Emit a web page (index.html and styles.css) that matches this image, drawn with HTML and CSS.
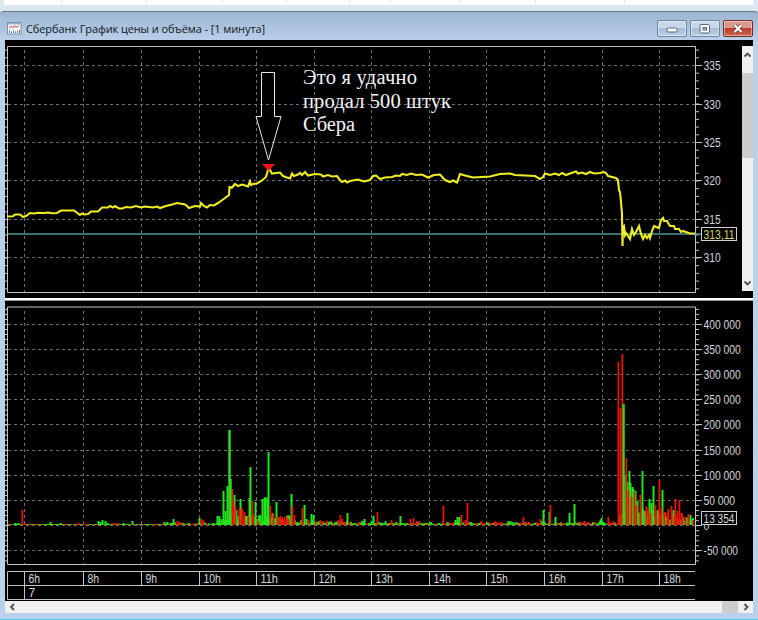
FILE: index.html
```html
<!DOCTYPE html>
<html lang="ru">
<head>
    <meta charset="UTF-8">
    <meta name="viewport" content="width=device-width, initial-scale=1.0">
    <title>Сбербанк График цены и объёма</title>
    <link rel="stylesheet" href="styles.css">
</head>
<body>
    <div class="top-strip">
        <span></span><span></span><span></span><span></span><span></span><span></span><span></span><span></span><span></span><span></span>
    </div>

    <div class="window">
        <div class="title-bar">
            <svg class="title-icon" width="15" height="13" viewBox="0 0 15 13">
                <rect x="0.5" y="0.5" width="13.5" height="11.5" fill="#f4f8fb" stroke="#7d93a5"/>
                <rect x="1" y="1" width="12.5" height="1.5" fill="#8fb4cc"/>
                <path d="M2 5.5l2-1 2 1 2-1.5 2 1 2-1" fill="none" stroke="#d2443c"/>
                <path d="M2.5 11V8.5M4.5 11V9.5M6.5 11V8.5M8.5 11V9.5M10.5 11V8.5M12.5 11V8" stroke="#5b7d96"/>
            </svg>
            <h1 class="title">Сбербанк График цены и объёма - [1 минута]</h1>
            <div class="buttons">
                <button class="btn">
                    <svg width="12" height="8" viewBox="0 0 12 8"><rect x="1" y="3" width="10" height="4" rx="1" fill="#fff" stroke="#5c6b7c"/></svg>
                </button>
                <button class="btn">
                    <svg width="12" height="10" viewBox="0 0 12 10"><rect x="1" y="0.5" width="9.5" height="8.5" rx="1" fill="#fff" stroke="#5c6b7c"/><rect x="4" y="3.5" width="3.5" height="2.5" fill="#9db8d6" stroke="#5c6b7c"/></svg>
                </button>
                <button class="btn btn-close">
                    <svg width="12" height="9" viewBox="0 0 12 9"><path d="M2.5 1l7 7M9.5 1l-7 7" stroke="#6d3a3a" stroke-width="3.6"/><path d="M2.5 1l7 7M9.5 1l-7 7" stroke="#fff" stroke-width="2.2"/></svg>
                </button>
            </div>
        </div>

        <div class="content">
            <div class="panel">
                <svg class="price-chart" width="737" height="258" viewBox="5 40 737 258">
                    <g id="price-grid"></g>
                    <path class="frame" d="M7.5 46.5H695.5V292.5H7.5Z"/>
                    <path class="last-price" d="M8 234H701"/>
                    <polyline id="price-line" class="price-line"/>
                    <path class="arrow" d="M261.5 72.5H274.5V116.5H281L268.5 160L256 116.5H261.5Z"/>
                    <path d="M262 164H275L268.5 171Z" fill="#f01414"/>
                    <g class="note">
                        <text x="303" y="84" textLength="114">Это я удачно</text>
                        <text x="303" y="108" textLength="148">продал 500 штук</text>
                        <text x="303" y="131" textLength="52">Сбера</text>
                    </g>
                    <rect class="tag" x="701.5" y="227.5" width="35" height="13"/>
                    <text class="label last" x="703.5" y="238.5" textLength="31" lengthAdjust="spacingAndGlyphs">313,11</text>
                </svg>
                <div class="scroll-v">
                    <svg width="11" height="27" viewBox="0 0 11 27"><path d="M2.5 10.5L5.5 7.5L8.5 10.5" class="chevron"/></svg>
                    <div class="thumb-v"></div>
                    <svg class="down" width="11" height="15" viewBox="0 0 11 15"><path d="M2.5 5.5L5.5 8.5L8.5 5.5" class="chevron"/></svg>
                </div>
            </div>

            <div class="splitter"></div>

            <svg class="volume-chart" width="748" height="300" viewBox="5 301 748 300">
                <g id="volume-grid"></g>
                <path class="frame" d="M7.5 307H695.5V564.5H7.5Z"/>
                <g id="bars"></g>
                <rect class="tag" x="701.5" y="511.5" width="35" height="13"/>
                <text class="label" x="703.5" y="522.5" textLength="31" lengthAdjust="spacingAndGlyphs">13 354</text>
                <path class="frame" d="M695 571.5H7.5V599.5H695M7.5 585.5H695M24.5 571V599"/>
                <g id="hours"></g>
                <text class="label" x="28.5" y="596.5">7</text>
            </svg>
        </div>

        <div class="scroll-h">
            <svg width="14" height="12" viewBox="0 0 14 12"><path d="M9 3L6 6L9 9" class="chevron"/></svg>
            <div class="thumb-h"></div>
            <svg width="15" height="12" viewBox="0 0 15 12"><path d="M6.5 3L9.5 6L6.5 9" class="chevron"/></svg>
        </div>
    </div>

    <script>
        const gridX = [24.5, 83.5, 141.5, 199.5, 256.5, 314.5, 371.5, 429.5, 486.5, 544.5, 602.5, 659.5];
        const hours = ['6h', '8h', '9h', '10h', '11h', '12h', '13h', '14h', '15h', '16h', '17h', '18h'];
        const priceRows = [[335, 65.5], [330, 104.5], [325, 142.5], [320, 180.5], [315, 219.5], [310, 257.5]];
        const volumeRows = [
            ['400 000', 324.5], ['350 000', 349.5], ['300 000', 374.5], ['250 000', 399.5], ['200 000', 424.5],
            ['150 000', 450.5], ['100 000', 475.5], ['50 000', 500.5], ['0', 525.5], ['-50 000', 550.5]
        ];

        const price = `7,216.5 13,216.3 15,214.5 20,214.5 23,217 26,216 30,213 34,213.5 38,212.7 44,213 48,212.5 52,213.3 57,213
            61,210.5 74,210.5 80,215 82,213.5 84,214.5 88,214 91,211.5 98,211.5 102,207.5 108,207.5 110,206 113,207.5 115,206
            119,208.5 122,208.5 126,207 131,207.5 136,206 141,207.5 145,206.5 153,207.5 157,206.5 160,208 166,206
            172,204.5 177,203 185,204.5 187,206 189,208 195,206 200,206.5 201,203 204,206 207,207.5 210,205 214,205.5
            218,203 223,199.5 229,195 229.5,187 232,187.5 235,184 238,186 242,184.5 248,186.5 250,181.5 251,185 253,184
            257,183.5 262,180.5 266,177 268,170 270,170 272,173.5 280,172.5 283,176 287,177.5 290,178.5 292,173.5 294,176 298,174.5
            300,173 302,175 305,172 308,175.5 315,174 321,174.5 323,176.5 328,175 332,176.5 337,176 340,180 342,182 345,180.5
            347,182.5 350,181 358,179.5 364,181.5 370,180 373,176 376,175.5 380,179 385,177.5 392,177 396,175.5 400,176
            402,174 407,175 411,173.5 416,175 422,174.5 428,177.5 434,175 440,174.5 445,180 450,182 453,180.5 457,182.5
            460,174 465,175.5 473,177.5 490,176.5 500,174 510,173.5 515,175 535,176 540,179 543,177 545,173.5 550,175 555,173.5
            559,175 562,173 566,175 570,173.5 576,171.5 578,173.5 582,172.5 586,174 590,172 594,173.5 600,173
            604,172 606,173 608,176 616,178 618,180 619,190 620,192 621,202 622,214 622.5,246 623,227 624,226 625,235
            626,233 628,236 630,239 632,229 634,235 636,232 639,226 641,234 643,239 645,235 647,238 649,235 650,238
            652,231 654,226 659,228 661,220 663,218 664,221 667,221 670,226 674,226 675,229 679,229 681,232 683,231 690,233.5 695,233.5`;

        // spikes as "x height", the height is in pixels above the zero line
        const green = `50 3 60 2 15 2 18 2 98 4 100 3 102 5 105 4 107 2 132 4 123 2 164 3 167 3 170 2 173 6 188 2 199 7
            217 9 219 9 221 6 223 34 225 14 227 39 229 95 230 46 233 20 234 30 236 15 238 9 240 26 246 9 249 27 250 58 255 23
            260 10 262 26 264 27 265 28 267 27 268 73 272 12 276 23 281 6 291 31 297 3 304 20 306 6 311 11 313 10 331 3
            347 12 354 2 362 4 364 6 373 9 371 4 385 4 400 9 396 3 455 5 457 8 459 8 508 4 510 4 512 3 541 4 543 15 549 13
            555 8 569 12 574 21 600 5 601 7 603 3 623 121 625 50 627 43 629 54 630 42 632 38 633 36 635 34 637 24 642 54
            645 14 647 10 649 26 651 22 653 39 657 15 662 35 665 8 673 15 678 4 683 4 690 10`.split(/\s+/).map(Number);
        const red = `22 15 78 2 112 2 115 2 118 2 177 4 179 3 181 2 201 6 203 5 232 36 233 24 235 19 239 16 241 17 242 16 244 13
            248 9 252 24 253 11 258 4 270 19 273 12 277 8 279 8 280 9 282 8 284 8 286 7 288 6 292 19 294 10 302 17 308 5 320 5
            322 4 338 5 340 10 342 6 377 13 391 5 410 6 413 7 416 4 419 4 443 19 461 10 467 22 465 5 481 4 495 4 523 8 526 3
            529 3 540 6 550 20 584 4 588 3 608 8 613 4 618 163 620 117 622 171 626 67 628 35 631 28 634 33 636 20 640 30
            646 19 648 17 650 12 655 20 656 14 659 45 661 17 664 13 667 12 668 16 671 19 674 10 675 26 677 14 679 25
            681 12 682 11 685 8 688 11 693 5`.split(/\s+/).map(Number);

        function gridLines(rows, top, bottom) {
            let out = '';
            gridX.forEach(x => { out += `<path class="grid" d="M${x} ${top + 4}V${bottom}"/>`; });
            rows.forEach(([label, y]) => {
                out += `<path class="grid" d="M8 ${y}H695"/><path class="frame" d="M5 ${y}H8M695 ${y}H702"/>`;
                out += `<text class="label" x="703.5" y="${y + 4.5}"${spread(label)}>${label}</text>`;
            });
            return out;
        }

        // keeps the axis digits narrow
        function spread(label) {
            const width = [...String(label)].reduce((w, c) => w + (c === ' ' || c === '-' ? 3 : 5.7), 0);
            return ` textLength="${width}" lengthAdjust="spacingAndGlyphs"`;
        }

        function ticks(from, to, step) {
            let d = '';
            for (let y = from; y < to; y += step) {
                d += `M5 ${y.toFixed(1)}H8M695 ${y.toFixed(1)}H699`;
            }
            return `<path class="frame" d="${d}"/>`;
        }

        function bars(list, color, width) {
            let out = '';
            for (let i = 0; i < list.length; i += 2) {
                out += `<rect x="${list[i] - 0.5}" y="${525 - list[i + 1]}" width="${width}" height="${list[i + 1]}" fill="${color}"/>`;
            }
            return out;
        }

        // low trades between the spikes
        function baseBars() {
            let out = '';
            let seed = 7;
            for (let x = 8; x < 694; x += 2) {
                seed = (seed * 1103 + 377) % 10007;
                const r = seed / 10007;
                let h = 1;
                if (x > 160) h = 1 + r * 2;
                if (x > 215 && x < 365) h = 1 + r * 4;
                if (x > 222 && x < 292) h = 3 + r * 7;
                if (x > 617) h = 6 + r * 12;
                if (x > 665) h = 3 + r * 9;
                const color = (seed % 7) < 3 ? '#28d414' : (seed % 7) < 5 ? '#e01a10' : '#8c8c14';
                out += `<rect x="${x}" y="${525 - h}" width="2" height="${h}" fill="${color}"/>`;
            }
            return out;
        }

        document.getElementById('price-grid').innerHTML = gridLines(priceRows, 46, 292) + ticks(50.1, 290, 7.7);
        document.getElementById('volume-grid').innerHTML = gridLines(volumeRows, 307, 564) + ticks(309.4, 562, 5.03);
        document.getElementById('price-line').setAttribute('points', price);
        document.getElementById('bars').innerHTML = baseBars() + bars(green, '#1ee81e', 2) + bars(red, '#e81408', 1.8)
            + bars([229, 95, 230, 46, 623, 121], '#30d820', 2);
        document.getElementById('hours').innerHTML = hours.map((h, i) =>
            `<path class="frame" d="M${gridX[i]} 571V585"/><text class="label" x="${gridX[i] + 4}" y="582.5" textLength="${h.length * 5.8}" lengthAdjust="spacingAndGlyphs">${h}</text>`
        ).join('');
    </script>
</body>
</html>
```
FILE: styles.css
```css
* {
    margin: 0;
    padding: 0;
    box-sizing: border-box;
}

body {
    width: 758px;
    height: 620px;
    overflow: hidden;
    background-color: #dce7f2;
    font-family: 'Open Sans', 'Noto Sans', sans-serif;
}

.top-strip {
    display: grid;
    grid-template-columns: 58px 85px 76px 64px 63px 41px 70px 75px 89px 1fr;
    height: 5px;
    margin: 0 4px;
    background-color: #fff;
}

.top-strip span {
    border-right: 1px solid #e4ecf4;
}

.window {
    height: 609px;
    margin-top: 6px;
    padding: 0 5px;
    border-top: 1px solid #66788a;
    border-bottom: 1px solid #5cc8e8;
    border-radius: 4px 4px 0 0;
    background: linear-gradient(#9db6d2, #bad0ea 29px, #b9d1ea);
}

.title-bar {
    display: flex;
    align-items: center;
    height: 28px;
    padding: 5px 0 0 2px;
}

.title-icon {
    flex: none;
    margin-top: -1px;
}

.title {
    flex: 1;
    margin-left: 4px;
    font-size: 11px;
    font-weight: 500;
    letter-spacing: -0.1px;
    line-height: 16px;
    color: #101822;
    white-space: nowrap;
}

.buttons {
    display: flex;
    gap: 3px;
}

.btn {
    display: flex;
    align-items: center;
    justify-content: center;
    width: 30px;
    height: 17px;
    border: 1px solid #6f8499;
    border-radius: 2px;
    box-shadow: inset 0 0 0 1px rgba(255, 255, 255, 0.45);
    background: linear-gradient(#c8d8ea 45%, #a4bcd6 50%, #bdd2e8);
}

.btn-close {
    border-color: #6b2c2c;
    background: linear-gradient(#dd9a8c 45%, #bd3c28 50%, #cf6650);
}

.content {
    height: 561px;
    background-color: #000;
}

.panel {
    display: flex;
    height: 258px;
}

.price-chart,
.volume-chart {
    display: block;
    flex: none;
}

.splitter {
    height: 3px;
    border-bottom: 1px solid #999;
    background-color: #fff;
}

.frame {
    fill: none;
    stroke: #c4c4c4;
    stroke-width: 1;
}

.grid {
    stroke: #6e6e6e;
    stroke-dasharray: 3 3;
}

.label {
    font-family: 'Liberation Sans', Arial, sans-serif;
    font-size: 12px;
    fill: #d8d8d8;
}

.label.last {
    fill: #d8d860;
}

.tag {
    fill: #000;
    stroke: #d0d0d0;
}

.price-line {
    fill: none;
    stroke: #eeee24;
    stroke-width: 2.1;
}

.last-price {
    stroke: #4f9a9a;
    stroke-width: 1.6;
}

.arrow {
    fill: none;
    stroke: #e8e8e8;
}

.note text {
    font-family: 'Liberation Serif', 'Times New Roman', serif;
    font-size: 20.5px;
    fill: #f4f4f4;
}

.scroll-v {
    display: flex;
    flex-direction: column;
    width: 11px;
    height: 245px;
    margin-top: 6px;
    background-color: #f0f0f0;
}

.thumb-v {
    height: 85px;
    background-color: #cdcdcd;
}

.down {
    margin-top: auto;
}

.chevron {
    fill: none;
    stroke: #505050;
    stroke-width: 1.8;
}

.scroll-h {
    display: flex;
    height: 12px;
    background-color: #f0f0f0;
}

.thumb-h {
    width: 16px;
    margin-left: auto;
    background-color: #cdcdcd;
}
```
